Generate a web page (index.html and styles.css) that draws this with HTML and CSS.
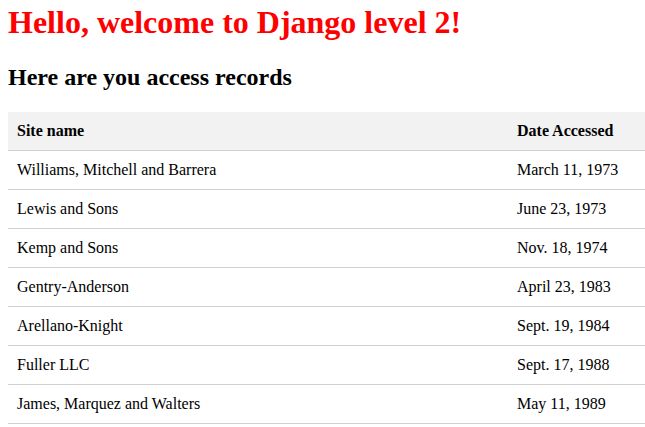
FILE: index.html
```html
<!DOCTYPE html>
<html>
<head>
<meta charset="utf-8">
<link rel="stylesheet" href="styles.css">
</head>
<body>
<h1 class="title">Hello, welcome to Django level 2!</h1>
<h2 class="subtitle">Here are you access records</h2>
<table class="records">
  <thead>
    <tr><th class="col-name">Site name</th><th class="col-date">Date Accessed</th></tr>
  </thead>
  <tbody>
    <tr><td>Williams, Mitchell and Barrera</td><td>March 11, 1973</td></tr>
    <tr><td>Lewis and Sons</td><td>June 23, 1973</td></tr>
    <tr><td>Kemp and Sons</td><td>Nov. 18, 1974</td></tr>
    <tr><td>Gentry-Anderson</td><td>April 23, 1983</td></tr>
    <tr><td>Arellano-Knight</td><td>Sept. 19, 1984</td></tr>
    <tr><td>Fuller LLC</td><td>Sept. 17, 1988</td></tr>
    <tr><td>James, Marquez and Walters</td><td>May 11, 1989</td></tr>
  </tbody>
</table>
</body>
</html>
```
FILE: styles.css
```css
body {
  margin: 0 0 0 8px;
  font-family: "Liberation Serif", "Times New Roman", serif;
  color: #000;
  background: #fff;
}
.title {
  color: #ff0000;
  font-size: 32px;
  font-weight: bold;
  margin: 4px 0 0;
  line-height: 37px;
}
.subtitle {
  font-size: 24px;
  margin: 22px 0 21px;
  line-height: 28px;
}
.records {
  width: calc(100% + 1px);
  margin-left: -1px;
  border-collapse: collapse;
  font-size: 16px;
}
.records th, .records td {
  text-align: left;
  padding: 10px 10px;
  line-height: 18px;
  border-bottom: 1px solid #d0d0d0;
}
.records thead tr {
  background: #f2f2f2;
}
.col-date {
  width: 118px;
}
```
